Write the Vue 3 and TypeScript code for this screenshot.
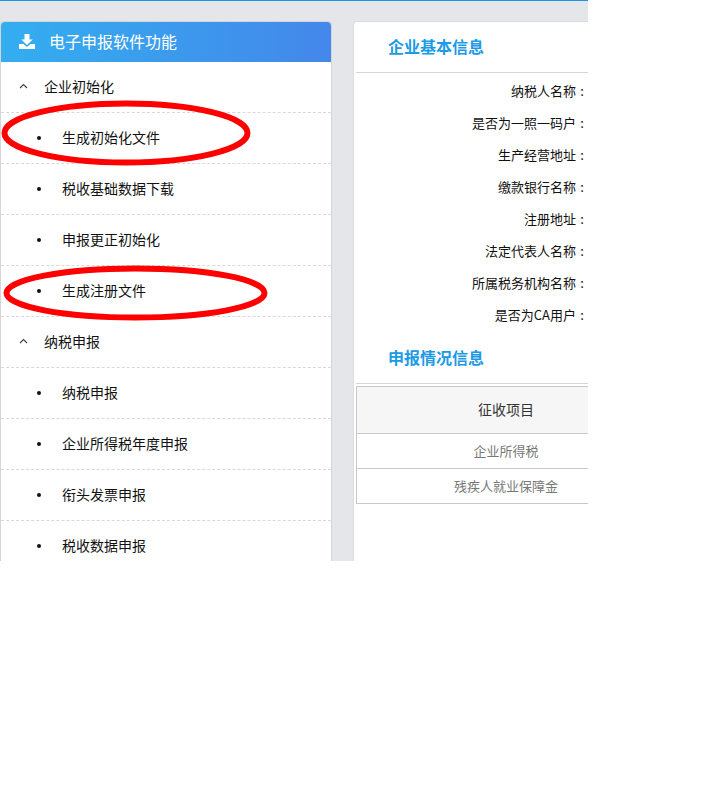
<script setup lang="ts">
interface MenuRow { label: string; group: boolean }
const rows: MenuRow[] = [
  { label: '企业初始化', group: true },
  { label: '生成初始化文件', group: false },
  { label: '税收基础数据下载', group: false },
  { label: '申报更正初始化', group: false },
  { label: '生成注册文件', group: false },
  { label: '纳税申报', group: true },
  { label: '纳税申报', group: false },
  { label: '企业所得税年度申报', group: false },
  { label: '衔头发票申报', group: false },
  { label: '税收数据申报', group: false },
]
const fields = ['纳税人名称', '是否为一照一码户', '生产经营地址', '缴款银行名称', '注册地址', '法定代表人名称', '所属税务机构名称', '是否为CA用户']
</script>

<template>
  <div class="frame">
    <div class="columns">
      <aside class="side">
        <div class="side-head">
          <svg class="dl" width="16" height="15" viewBox="0 0 16 15">
            <path d="M5.500 0h5v5.500h3.200L8 11 2.300 5.500h3.200z" fill="#fff" />
            <path d="M0 10h4.500L8 13l3.500-3H16v5H0z" fill="#fff" />
          </svg>
          <span>电子申报软件功能</span>
        </div>
        <div v-for="(r, i) in rows" :key="i" class="row" :class="r.group ? 'group' : 'item'">
          <svg v-if="r.group" class="chev" width="9" height="6" viewBox="0 0 9 6">
            <path d="M1 5l3.500-3.500L8 5" fill="none" stroke="#444" stroke-width="1.200" />
          </svg>
          <i v-else class="dot"></i>
          <span class="label">{{ r.label }}</span>
        </div>
      </aside>
      <main class="main">
        <h2 class="title first">企业基本信息</h2>
        <div class="fields">
          <div v-for="f in fields" :key="f" class="field">{{ f }}<span class="colon">:</span></div>
        </div>
        <h2 class="title second">申报情况信息</h2>
        <div class="table">
          <div class="cell head">征收项目</div>
          <div class="cell">企业所得税</div>
          <div class="cell">残疾人就业保障金</div>
        </div>
      </main>
    </div>
    <svg class="marks" width="300" height="330" viewBox="0 0 300 330">
      <ellipse cx="126" cy="133" rx="121.500" ry="29.500" fill="none" stroke="#ff0000" stroke-width="6" />
      <ellipse cx="135.500" cy="293" rx="129" ry="24.500" fill="none" stroke="#ff0000" stroke-width="6" />
    </svg>
  </div>
</template>

<style>
html, body { background: #fff; }
</style>

<style scoped>
.frame {
  position: relative;
  width: 588px;
  height: 561px;
  overflow: hidden;
  box-sizing: border-box;
  background: #e4e6ea;
  border-top: 1px solid #1e96e8;
  padding-top: 21px;
  font-family: "Noto Sans CJK SC", "Liberation Sans", sans-serif;
  font-size: 13px;
  color: #111;
}
.columns {
  display: flex;
  gap: 22px;
  align-items: flex-start;
}
.side {
  width: 332px;
  flex: none;
  box-sizing: border-box;
  background: #fff;
  border: 1px solid #d4d6da;
  border-top: none;
  border-radius: 4px 4px 0 0;
  box-shadow: 0 -1px 0 #d4d6da;
  font-size: 14px;
}
.side-head {
  height: 40px;
  display: flex;
  align-items: center;
  padding-left: 18px;
  gap: 14px;
  font-size: 16px;
  color: #fff;
  background: linear-gradient(90deg, #33aef0, #4487ea);
  border-radius: 4px 4px 0 0;
}
.side-head span { position: relative; top: -1px; }
.dl { flex: none; margin-top: -2px; }
.row {
  height: 51px;
  box-sizing: border-box;
  display: flex;
  align-items: center;
  border-bottom: 1px dashed #d9d9d9;
}
.label { margin-top: -2px; }
.group { padding-left: 18px; gap: 16px; }
.chev { flex: none; margin-top: -2px; }
.item { padding-left: 36px; gap: 21px; }
.dot {
  width: 4px;
  height: 4px;
  border-radius: 50%;
  background: #111;
  flex: none;
}
.main {
  flex: 1;
  min-width: 0;
  height: 560px;
  background: #fff;
  border-radius: 3px 0 0 0;
  box-shadow: 0 0 0 1px #dcdde1;
  padding-left: 2px;
  box-sizing: border-box;
}
.title {
  margin: 0;
  padding-left: 32px;
  font-size: 16px;
  font-weight: 700;
  color: #1b9ae6;
  border-bottom: 1px solid #d4d6da;
}
.title.first { height: 50px; line-height: 49px; }
.title.second { height: 47px; line-height: 42px; margin-top: 5px; }
.fields {
  padding-top: 2px;
  width: 232px;
  white-space: nowrap;
}
.field {
  height: 32px;
  line-height: 32px;
  text-align: right;
}
.colon {
  display: inline-block;
  width: 12px;
  text-align: center;
}
.table {
  margin-top: 2px;
  border-left: 1px solid #c8c8c8;
}
.cell {
  height: 35px;
  line-height: 34px;
  box-sizing: border-box;
  width: 298px;
  text-align: center;
  color: #777;
  border-bottom: 1px solid #c8c8c8;
}
.cell.head {
  height: 48px;
  line-height: 44px;
  font-size: 14px;
  color: #333;
  background: #f6f6f6;
  border-top: 1px solid #c8c8c8;
}
.marks {
  position: absolute;
  left: 0;
  top: -1px;
}
</style>
